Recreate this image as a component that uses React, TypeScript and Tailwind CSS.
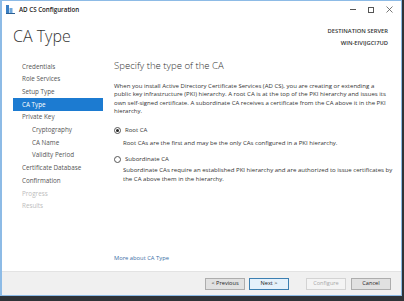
import React from "react";

const navItems = [
  { label: "Credentials", level: 0 },
  { label: "Role Services", level: 0 },
  { label: "Setup Type", level: 0 },
  { label: "CA Type", level: 0, active: true },
  { label: "Private Key", level: 0 },
  { label: "Cryptography", level: 1 },
  { label: "CA Name", level: 1 },
  { label: "Validity Period", level: 1 },
  { label: "Certificate Database", level: 0 },
  { label: "Confirmation", level: 0 },
  { label: "Progress", level: 0, disabled: true },
  { label: "Results", level: 0, disabled: true },
];

function AppIcon() {
  return (
    <svg width="9" height="9" viewBox="0 0 9 9">
      <rect x="0" y="0" width="3" height="8" fill="#3a7fc4" />
      <rect x="3.5" y="3" width="3" height="5" fill="#6fa8dc" />
      <rect x="0" y="8" width="9" height="1" fill="#2a5f94" />
    </svg>
  );
}

function Radio({ checked }: { checked?: boolean }) {
  return (
    <span className="flex h-[7px] w-[7px] items-center justify-center rounded-full border border-[#555] bg-white">
      {checked && <span className="h-[3px] w-[3px] rounded-full bg-[#222]" />}
    </span>
  );
}

function Button({
  children,
  focused,
  disabled,
}: {
  children: React.ReactNode;
  focused?: boolean;
  disabled?: boolean;
}) {
  return (
    <div
      className={
        "flex h-[12px] w-[40px] items-center justify-center border text-[5.6px] " +
        (focused
          ? "border-[#3c7fb1] bg-[#e5f1fb] text-[#222]"
          : disabled
          ? "border-[#d3d3d3] bg-[#f4f4f4] text-[#a8a8a8]"
          : "border-[#adadad] bg-[#e1e1e1] text-[#222]")
      }
    >
      {children}
    </div>
  );
}

export default function App() {
  return (
    <div
      className="flex h-[301px] w-[404px] flex-col bg-[#2f3337]"
      style={{ fontFamily: '"Open Sans", "Noto Sans", sans-serif' }}
    >
      <div className="flex h-[296px] w-[402px] flex-col border border-l-2 border-[#8dbbe6] bg-white">
        {/* title bar */}
        <div className="flex h-[17px] shrink-0 items-center pl-[4px] pr-[8px]">
          <AppIcon />
          <span className="ml-[4px] text-[6.2px] font-semibold text-[#222]">
            AD CS Configuration
          </span>
          <div className="ml-auto flex items-center gap-[12px] text-[#444]">
            <span className="block h-px w-[6px] bg-[#555]" />
            <span className="block h-[6px] w-[6px] border border-[#555]" />
            <svg width="7" height="7" viewBox="0 0 7 7">
              <path d="M0.5 0.5L6.5 6.5M6.5 0.5L0.5 6.5" stroke="#555" strokeWidth="0.8" />
            </svg>
          </div>
        </div>

        {/* header */}
        <div className="flex h-[39px] shrink-0 items-start justify-between pl-[11px] pr-[13px]">
          <div className="pt-[10px] text-[16px] font-light leading-none text-[#333]">CA Type</div>
          <div className="pt-[7px] text-right text-[5.8px] font-semibold leading-[12px] text-[#333]">
            <div>DESTINATION SERVER</div>
            <div>WIN-EIVIJGCI7UD</div>
          </div>
        </div>

        {/* body */}
        <div className="flex min-h-0 flex-1">
          <div className="w-[101px] shrink-0 pl-[11px] pt-[3px]">
            <div className="flex flex-col">
              {navItems.map((item) => (
                <div
                  key={item.label}
                  className={
                    "flex h-[12.7px] items-center text-[6.3px] " +
                    (item.level ? "pl-[19px] " : "pl-[9px] ") +
                    (item.active
                      ? "bg-[#1c7bd1] text-white"
                      : item.disabled
                      ? "text-[#bcbcbc]"
                      : "text-[#555]")
                  }
                >
                  {item.label}
                </div>
              ))}
            </div>
          </div>
          <div className="mb-[6px] mt-[1px] w-px bg-[#dcdcdc]" />
          <div className="flex flex-1 flex-col whitespace-nowrap pl-[11px] pr-[10px] pt-[2px] text-[6.05px] text-[#333]">
            <div className="text-[9.6px] font-light leading-[13px]">Specify the type of the CA</div>
            <p className="mt-[10px] leading-[8.4px]">
              When you install Active Directory Certificate Services (AD CS), you are creating or extending a
              <br />
              public key infrastructure (PKI) hierarchy. A root CA is at the top of the PKI hierarchy and issues its
              <br />
              own self-signed certificate. A subordinate CA receives a certificate from the CA above it in the PKI
              <br />
              hierarchy.
            </p>
            <div className="mt-[10px] flex items-center gap-[4px]">
              <Radio checked />
              <span>Root CA</span>
            </div>
            <p className="mt-[4px] pl-[9px] leading-[8.4px]">
              Root CAs are the first and may be the only CAs configured in a PKI hierarchy.
            </p>
            <div className="mt-[8px] flex items-center gap-[4px]">
              <Radio />
              <span>Subordinate CA</span>
            </div>
            <p className="mt-[2px] pl-[9px] leading-[8.4px]">
              Subordinate CAs require an established PKI hierarchy and are authorized to issue certificates by
              <br />
              the CA above them in the hierarchy.
            </p>
            <div className="mt-auto pb-[8px] text-[5.8px] text-[#3a6ea5]">More about CA Type</div>
          </div>
        </div>

        {/* footer */}
        <div className="flex h-[24px] shrink-0 items-center justify-end border-t border-[#e3e3e3] bg-[#f0f0f0] pr-[10px]">
          <Button>&lt; Previous</Button>
          <div className="ml-[4px]">
            <Button focused>Next &gt;</Button>
          </div>
          <div className="ml-[17px]">
            <Button disabled>Configure</Button>
          </div>
          <div className="ml-[5px]">
            <Button>Cancel</Button>
          </div>
        </div>
      </div>
    </div>
  );
}
